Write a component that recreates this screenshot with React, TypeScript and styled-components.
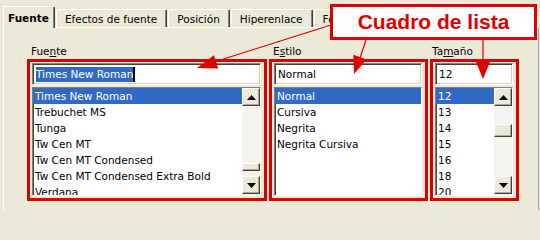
import styled, { createGlobalStyle } from "styled-components";

const GlobalStyle = createGlobalStyle`
    html, body {
        margin: 0;
        padding: 0;
        background: #ece9d8;
    }
    * { box-sizing: border-box; }
`;

const Page = styled.div`
    position: relative;
    width: 540px;
    height: 210px;
    overflow: hidden;
    background: #ece9d8;
    font-family: "DejaVu Sans", Verdana, sans-serif;
    font-size: 10.5px;
    color: #000;
    display: flex;
    flex-direction: column;
`;

const TabStrip = styled.div`
    display: flex;
    align-items: flex-end;
    height: 27px;
    padding-left: 3px;
    gap: 1px;
    position: relative;
    z-index: 1;
`;

const Tab = styled.div<{ active?: boolean }>`
    height: ${(p) => (p.active ? "22px" : "18px")};
    margin-bottom: ${(p) => (p.active ? "-1px" : "0")};
    padding: 0 ${(p) => (p.active ? "5px" : "9px")} 0 ${(p) => (p.active ? "4px" : "8px")};
    display: flex;
    align-items: center;
    white-space: nowrap;
    font-weight: ${(p) => (p.active ? 700 : 400)};
    background: #ece9d8;
    border-top: 1px solid #fff;
    border-left: 1px solid #fff;
    border-right: 1px solid #404040;
    box-shadow: inset -1px 0 #808080;
    border-radius: 2px 2px 0 0;
    padding-top: ${(p) => (p.active ? "0" : "1px")};
`;

const Panel = styled.div`
    flex: 1;
    margin: 0 1px 0 3px;
    border-top: 1px solid #fff;
    border-left: 1px solid #fff;
    border-right: 1px solid #a0a0a0;
    padding: 17px 0 0 23px;
`;

const Fields = styled.div`
    display: flex;
    gap: 2px;
`;

const Field = styled.div<{ w: number }>`
    width: ${(p) => p.w}px;
    display: flex;
    flex-direction: column;
`;

const Label = styled.div<{ indent: number }>`
    height: 13px;
    line-height: 13px;
    margin-bottom: 1px;
    padding-left: ${(p) => p.indent}px;
`;

const RedBox = styled.div`
    border: 3px solid #dc0000;
    padding: 1px 3px 2px 2px;
    display: flex;
    flex-direction: column;
    gap: 2px;
`;

const TextInput = styled.div`
    height: 22px;
    background: #fff;
    border: 1px solid;
    border-color: #808080 #fff #fff #808080;
    box-shadow: inset 1px 1px #404040, inset -1px -1px #d4d0c8;
    display: flex;
    align-items: center;
    padding-left: 3px;
    white-space: nowrap;
`;

const Highlight = styled.span`
    background: #316ac5;
    color: #fff;
    line-height: 15px;
`;

const Caret = styled.span`
    display: inline-block;
    width: 2px;
    height: 15px;
    background: #000;
`;

const ListBox = styled.div`
    height: 109px;
    background: #fff;
    border: 1px solid;
    border-color: #808080 #fff #fff #808080;
    box-shadow: inset 1px 1px #404040;
    display: flex;
    overflow: hidden;
`;

const Rows = styled.div`
    flex: 1;
    min-width: 0;
`;

const Row = styled.div<{ selected?: boolean }>`
    height: 16px;
    line-height: 16px;
    padding-left: 2px;
    white-space: nowrap;
    background: ${(p) => (p.selected ? "#316ac5" : "transparent")};
    color: ${(p) => (p.selected ? "#fff" : "#000")};
`;

const ScrollBar = styled.div`
    width: 18px;
    display: flex;
    flex-direction: column;
    background: #f4f3ee;
    padding-bottom: 1px;
`;

const ScrollButton = styled.div`
    height: 18px;
    background: #ece9d8;
    border: 1px solid;
    border-color: #fff #404040 #404040 #fff;
    box-shadow: inset -1px -1px #aca899;
    display: flex;
    align-items: center;
    justify-content: center;
`;

const Track = styled.div`
    flex: 1;
    position: relative;
`;

const Thumb = styled.div`
    position: absolute;
    left: 0;
    right: 0;
    background: #ece9d8;
    border: 1px solid;
    border-color: #fff #404040 #404040 #fff;
    box-shadow: inset -1px -1px #aca899;
`;

const Callout = styled.div`
    position: absolute;
    left: 330px;
    top: 4px;
    width: 207px;
    height: 36px;
    border: 3px solid #dc0000;
    background: #fff;
    display: flex;
    align-items: center;
    justify-content: center;
    font-family: "Liberation Sans", Arial, sans-serif;
    font-weight: 700;
    font-size: 21px;
    color: #e00000;
    z-index: 3;
`;

const Overlay = styled.svg`
    position: absolute;
    left: 0;
    top: 0;
    z-index: 2;
    pointer-events: none;
`;

function Arrow({ up }: { up?: boolean }) {
    return (
        <svg width="9" height="5" viewBox="0 0 9 5">
            <polygon points={up ? "4.5,0 9,5 0,5" : "0,0 9,0 4.5,5"} fill="#000" />
        </svg>
    );
}

interface ListProps {
    items: string[];
    scroll?: { top: number; height: number };
}

function List({ items, scroll }: ListProps) {
    return (
        <ListBox>
            <Rows>
                {items.map((item, i) => (
                    <Row key={item} selected={i === 0}>
                        {item}
                    </Row>
                ))}
            </Rows>
            {scroll && (
                <ScrollBar>
                    <ScrollButton>
                        <Arrow up />
                    </ScrollButton>
                    <Track>
                        <Thumb style={{ top: scroll.top, height: scroll.height }} />
                    </Track>
                    <ScrollButton>
                        <Arrow />
                    </ScrollButton>
                </ScrollBar>
            )}
        </ListBox>
    );
}

const fonts = [
    "Times New Roman",
    "Trebuchet MS",
    "Tunga",
    "Tw Cen MT",
    "Tw Cen MT Condensed",
    "Tw Cen MT Condensed Extra Bold",
    "Verdana",
];
const styles = ["Normal", "Cursiva", "Negrita", "Negrita Cursiva"];
const sizes = ["12", "13", "14", "15", "16", "18", "20"];

export default function App() {
    return (
        <Page>
            <GlobalStyle />
            <TabStrip>
                <Tab active>Fuente</Tab>
                <Tab>Efectos de fuente</Tab>
                <Tab>Posición</Tab>
                <Tab>Hiperenlace</Tab>
                <Tab>Fondo</Tab>
            </TabStrip>
            <Panel>
                <Fields>
                    <Field w={240}>
                        <Label indent={4}>
                            Fue<u>n</u>te
                        </Label>
                        <RedBox>
                            <TextInput>
                                <Highlight>Times New Roman</Highlight>
                                <Caret />
                            </TextInput>
                            <List items={fonts} scroll={{ top: 57, height: 8 }} />
                        </RedBox>
                    </Field>
                    <Field w={159}>
                        <Label indent={4}>
                            E<u>s</u>tilo
                        </Label>
                        <RedBox>
                            <TextInput>Normal</TextInput>
                            <List items={styles} />
                        </RedBox>
                    </Field>
                    <Field w={89}>
                        <Label indent={2}>
                            Ta<u>m</u>año
                        </Label>
                        <RedBox>
                            <TextInput>12</TextInput>
                            <List items={sizes} scroll={{ top: 18, height: 13 }} />
                        </RedBox>
                    </Field>
                </Fields>
            </Panel>
            <Overlay width="540" height="210" viewBox="0 0 540 210">
                <line x1="331" y1="25" x2="214" y2="62" stroke="#dc0000" strokeWidth="1.2" />
                <polygon points="197,68 218.2,68.5 213.9,55.2" fill="#e00000" />
                <line x1="366" y1="40" x2="360" y2="58" stroke="#dc0000" strokeWidth="1.2" />
                <polygon points="354,74 366.6,59.4 353.4,54.7" fill="#e00000" />
                <line x1="483" y1="40" x2="483" y2="63" stroke="#dc0000" strokeWidth="1.2" />
                <polygon points="483,79 490,62 476,62" fill="#e00000" />
            </Overlay>
            <Callout>Cuadro de lista</Callout>
        </Page>
    );
}
